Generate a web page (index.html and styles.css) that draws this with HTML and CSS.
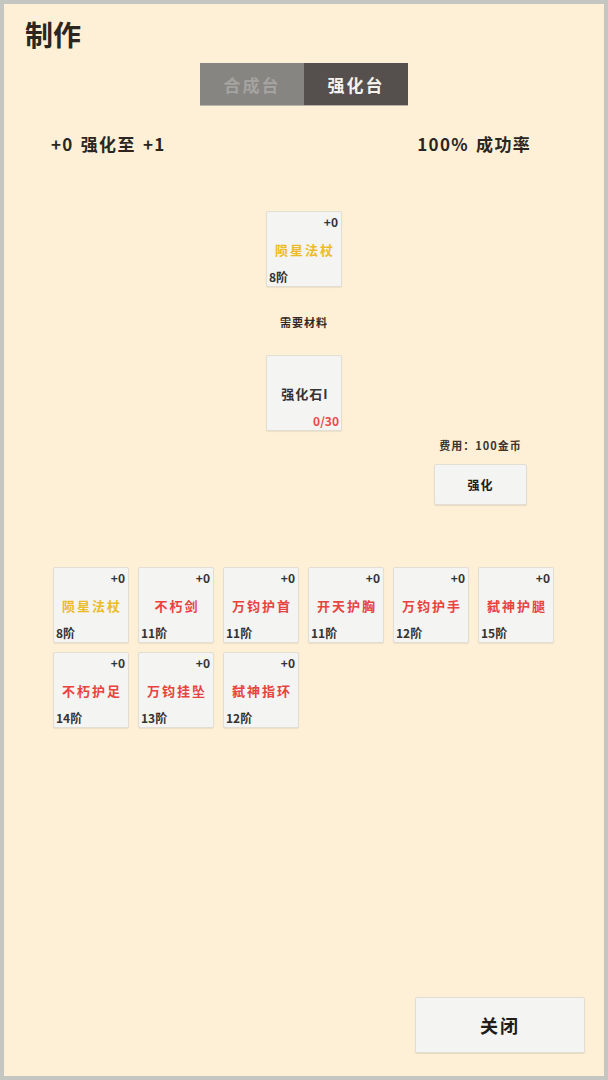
FILE: index.html
```html
<!DOCTYPE html>
<html lang="zh">
<head>
<meta charset="utf-8">
<title>制作</title>
<link rel="stylesheet" href="styles.css">
</head>
<body>
<div class="panel">
  <h1 class="title">制作</h1>

  <div class="tabs">
    <div class="tab">合成台</div>
    <div class="tab active">强化台</div>
  </div>

  <div class="stats">
    <span>+0 强化至 +1</span>
    <span>100% 成功率</span>
  </div>

  <div class="forge">
    <div class="card">
      <span class="level">+0</span>
      <span class="name gold">陨星法杖</span>
      <span class="tier">8阶</span>
    </div>
    <div class="need">需要材料</div>
    <div class="card">
      <span class="name dark">强化石I</span>
      <span class="count">0/30</span>
    </div>
  </div>

  <div class="cost">
    <div class="fee">费用：100金币</div>
    <button class="btn upgrade">强化</button>
  </div>

  <div class="bag">
    <div class="card"><span class="level">+0</span><span class="name gold">陨星法杖</span><span class="tier">8阶</span></div>
    <div class="card"><span class="level">+0</span><span class="name red">不朽剑</span><span class="tier">11阶</span></div>
    <div class="card"><span class="level">+0</span><span class="name red">万钧护首</span><span class="tier">11阶</span></div>
    <div class="card"><span class="level">+0</span><span class="name red">开天护胸</span><span class="tier">11阶</span></div>
    <div class="card"><span class="level">+0</span><span class="name red">万钧护手</span><span class="tier">12阶</span></div>
    <div class="card"><span class="level">+0</span><span class="name red">弑神护腿</span><span class="tier">15阶</span></div>
    <div class="card"><span class="level">+0</span><span class="name red">不朽护足</span><span class="tier">14阶</span></div>
    <div class="card"><span class="level">+0</span><span class="name red">万钧挂坠</span><span class="tier">13阶</span></div>
    <div class="card"><span class="level">+0</span><span class="name red">弑神指环</span><span class="tier">12阶</span></div>
  </div>

  <div class="footer">
    <button class="btn close">关闭</button>
  </div>
</div>
</body>
</html>
```

FILE: styles.css
```css
* {
  box-sizing: border-box;
}

html, body {
  margin: 0;
  padding: 0;
}

body {
  background: #c3c6c1;
  padding: 4px;
  font-family: "Noto Sans CJK SC", "Noto Sans", sans-serif;
  color: #2f2a26;
}

.panel {
  height: 1072px;
  background: #fdf0d6;
  display: flex;
  flex-direction: column;
  position: relative;
}

.title {
  margin: 0;
  padding: 12px 0 0 21px;
  font-size: 28px;
  line-height: 36px;
  font-weight: 700;
  color: #2b2622;
}

.tabs {
  display: flex;
  justify-content: center;
  margin-top: 11px;
}

.tab {
  width: 104px;
  height: 43px;
  display: flex;
  align-items: center;
  justify-content: center;
  background: #878582;
  color: #a5a3a0;
  font-size: 17px;
  font-weight: 700;
  letter-spacing: 2px;
  border-bottom: 1px solid #b9b4ab;
}

.tab.active {
  background: #55504d;
  color: #f4f2ee;
}

.stats {
  display: flex;
  justify-content: space-between;
  padding: 0 73px 0 47px;
  margin-top: 25px;
  font-size: 17px;
  font-weight: 700;
  line-height: 26px;
  letter-spacing: 1.3px;
  word-spacing: 2px;
  color: #2b2622;
}

.forge {
  display: flex;
  flex-direction: column;
  align-items: center;
  margin-top: 54px;
}

.need {
  font-size: 11px;
  font-weight: 700;
  line-height: 16px;
  margin: 27px 0 25px;
  letter-spacing: 1px;
}

.card {
  width: 76px;
  height: 76px;
  position: relative;
  background: #f4f4f3;
  border: 1px solid #e2ddd5;
  border-radius: 2px;
  box-shadow: 0 1px 1px rgba(150, 130, 100, 0.15);
  display: flex;
  align-items: center;
  justify-content: center;
}

.card .name {
  font-size: 13px;
  font-weight: 700;
  letter-spacing: 2px;
  margin: 1px 0 0 2px;
}

.card .name.dark {
  color: #333;
  font-size: 13px;
  letter-spacing: 1px;
}

.gold {
  color: #ecbc28;
}

.red {
  color: #e8433f;
}

.card .level {
  position: absolute;
  top: 2px;
  right: 3px;
  font-size: 12px;
  font-weight: 700;
  line-height: 16px;
  color: #333;
}

.card .tier {
  position: absolute;
  left: 2px;
  bottom: 1px;
  font-size: 12px;
  font-weight: 700;
  line-height: 16px;
  color: #333;
}

.card .count {
  position: absolute;
  right: 2px;
  bottom: 1px;
  font-size: 12px;
  font-weight: 700;
  line-height: 16px;
  color: #ea4a4a;
}

.cost {
  display: flex;
  flex-direction: column;
  align-items: center;
  align-self: flex-end;
  margin: 6px 77px 0 0;
  width: 93px;
}

.fee {
  font-size: 11px;
  font-weight: 700;
  line-height: 16px;
  letter-spacing: 1px;
  white-space: nowrap;
  color: #3a342f;
}

.btn {
  font-family: inherit;
  font-weight: 700;
  color: #1f1c1a;
  background: #f4f4f3;
  border: 1px solid #e2ddd5;
  border-radius: 2px;
  box-shadow: 0 1px 1px rgba(150, 130, 100, 0.2);
  padding: 0;
}

.upgrade {
  width: 93px;
  height: 41px;
  margin-top: 11px;
  font-size: 12px;
  letter-spacing: 1px;
}

.bag {
  display: grid;
  grid-template-columns: repeat(6, 76px);
  gap: 9px;
  margin: 62px 0 0 49px;
}

.footer {
  margin-top: auto;
  display: flex;
  justify-content: flex-end;
  padding: 0 19px 23px 0;
}

.close {
  width: 170px;
  height: 56px;
  font-size: 18px;
  letter-spacing: 2px;
}
```
